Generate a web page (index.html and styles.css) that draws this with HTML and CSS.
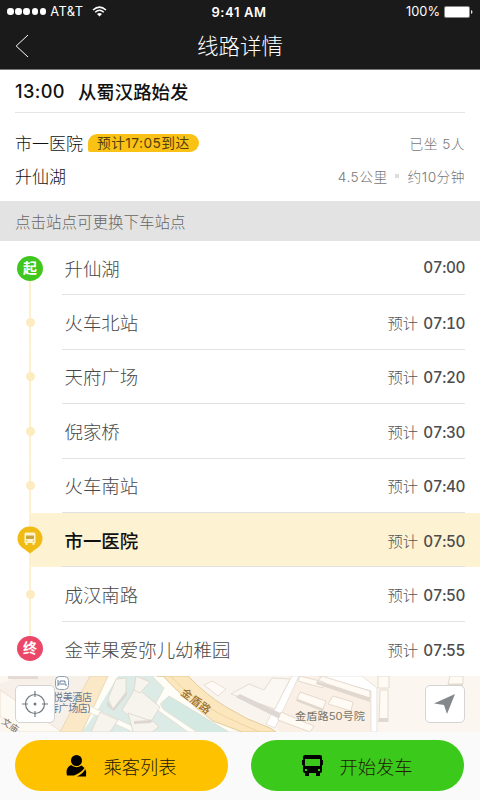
FILE: index.html
```html
<!DOCTYPE html>
<html lang="zh-CN">
<head>
<meta charset="utf-8">
<title>线路详情</title>
<link rel="stylesheet" href="styles.css">
</head>
<body>
<main class="app">
  <header class="top">
    <div class="status">
      <div class="carrier"><span class="signal"><i></i><i></i><i></i><i></i><i></i></span><span class="network">AT&amp;T</span>
        <svg class="wifi" width="15" height="11" viewBox="0 0 15 11"><g fill="none" stroke="#fff" stroke-width="1.5"><path d="M1 4Q7.500-1.800 14 4M3.200 6.200Q7.500 2.300 11.800 6.200"/></g><path d="M5 8Q7.500 5.800 10 8L7.500 10.600Z" fill="#fff"/></svg>
      </div>
      <div class="clock">9:41 AM</div>
      <div class="power"><span>100%</span><svg width="29" height="12" viewBox="0 0 29 12"><rect x=".5" y=".5" width="25" height="11" rx="1.500" fill="#fff" stroke="#888"/><path d="M27 4v4q1.500-.6 1.500-2T27 4" fill="#ddd"/></svg></div>
    </div>
    <nav class="nav">
      <svg class="back" width="14" height="24" viewBox="0 0 14 24"><path d="M13 1 1.200 12 13 23" fill="none" stroke="#fff" stroke-width="1"/></svg>
      <h1>线路详情</h1>
    </nav>
  </header>
  <section class="trip">
    <h2><span class="depart">13:00</span><span>从蜀汉路始发</span></h2>
    <div class="legs">
      <div class="leg"><span class="place">市一医院</span><span class="eta">预计17:05到达</span><span class="meta">已坐 5人</span></div>
      <div class="leg"><span class="place">升仙湖</span><span class="meta">4.5公里<i class="sep"></i>约10分钟</span></div>
    </div>
  </section>
  <p class="hint">点击站点可更换下车站点</p>
  <ul class="stops">
    <li class="first"><span class="rail"><b class="badge start">起</b></span><div class="stop"><span>升仙湖</span><span class="time"><b>07:00</b></span></div></li>
    <li><span class="rail"><i class="dot"></i></span><div class="stop"><span>火车北站</span><span class="time">预计 <b>07:10</b></span></div></li>
    <li><span class="rail"><i class="dot"></i></span><div class="stop"><span>天府广场</span><span class="time">预计 <b>07:20</b></span></div></li>
    <li><span class="rail"><i class="dot"></i></span><div class="stop"><span>倪家桥</span><span class="time">预计 <b>07:30</b></span></div></li>
    <li><span class="rail"><i class="dot"></i></span><div class="stop"><span>火车南站</span><span class="time">预计 <b>07:40</b></span></div></li>
    <li class="current"><span class="rail"><svg class="pin" width="26" height="28" viewBox="0 0 26 28"><path d="M13 27.500 7.500 23.200A12.500 12 0 1 1 18.500 23.200Z" fill="#f0bb12"/><path d="M9 6.500h8q1.500 0 1.500 1.500v9h-1v2h-2v-2h-5v2h-2v-2h-1V8q0-1.500 1.500-1.500Z" fill="#fff4cd"/><path d="M9 9.500h8v3.500H9Z" fill="#c8a63e"/><path d="M8.800 15h1.500M15.700 15h1.500" stroke="#dba900"/></svg></span><div class="stop"><span>市一医院</span><span class="time">预计 <b>07:50</b></span></div></li>
    <li><span class="rail"><i class="dot"></i></span><div class="stop"><span>成汉南路</span><span class="time">预计 <b>07:50</b></span></div></li>
    <li class="last"><span class="rail"><b class="badge end">终</b></span><div class="stop"><span>金苹果爱弥儿幼稚园</span><span class="time">预计 <b>07:55</b></span></div></li>
  </ul>
  <section class="map">
    <svg class="canvas" width="480" height="56" viewBox="0 0 480 56">
      <rect width="480" height="56" fill="#fbf7f0"/>
      <path d="M0 8 20 0H92L60 56H54L0 18Z" fill="#f7f0e9"/>
      <path d="M8 0H38V3H8Z" fill="#e4dad3"/>
      <path d="M0 14 62 56H20L0 40Z" fill="#fdfaf4" stroke="#ecdccb" stroke-width=".8"/>
      <path d="M118 0H160L166 12 156 28 192 56H82L92 31Z" fill="#dcebe5"/>
      <path d="M108 0H118L95 38 82 56H78Z" fill="#fffdf8"/>
      <path d="M90 0H108L82 56H60Z" fill="#fbe8c6" stroke="#e6d3af" stroke-width=".8"/>
      <path d="M166 18 232 56H196L160 31Z" fill="#d5e9e3"/>
      <path d="M88 29 94 32 145 56H133L84 34Z" fill="#fffdf8" stroke="#e2dccf" stroke-width=".7"/>
      <path d="M187 0H292L268 50 226 31Z" fill="#f9f4ed"/>
      <path d="M297 0H362L374 12V56H280L273 44Z" fill="#fbf0e6"/>
      <path d="M160 0H169L226 49 250 56H229L169 20 160 28 164 34 197 56H188L156 33Q154 29 157 25L164 12 152 0Z" fill="#fffdf8" stroke="#ddd8c9" stroke-width=".7"/>
      <path d="M157 0H188Q205 18 226 31T270 52L276 56H242L213 45Q186 25 163 0Z" fill="#fce6bd" stroke="#dfc794" stroke-width=".9"/>
      <path d="M170 0Q197 27 222 39T260 56" fill="none" stroke="#ecd29c" stroke-width=".9"/>
      <path d="M292 0H299L275 52 266 48ZM362 0 377 12V56H371V15L318 0Z" fill="#fff" stroke="#ded8ce" stroke-width=".7"/>
      <g fill="#f7f3ed" stroke="#dbd5cc" stroke-width=".8">
        <path d="m108 23 8-20 10-1v14l-13 17Z"/><path d="m122 34 14-23 24 20-8 13-18 1Z"/><path d="m136 0 14 6-10 11-6-3Z"/><path d="m100 36 18 8-8 12H91Z"/><path d="m128 37 26 9 5 5-7 5h-19Z"/>
      </g>
      <path d="m107 25 6 8 14-17v3l-13 16-7-5ZM134 45l18-1-1 3-17 1ZM240 18l44 21-2 5-46-23Z" fill="#ddd6d2"/>
      <path d="m231 18 18-10 15 6 8-12 18 1-15 30Z" fill="#fbf7f2" stroke="#e6ded4"/>
      <path d="m240 18 44 21-2 5-46-23Z" fill="#ded7d3"/>
      <path d="m204 9 8-4 14 8-8 7Z" fill="#fffaf5" stroke="#eadfd3"/>
      <g fill="#fffaf3" stroke="#ddd3c7" stroke-width=".8">
        <path d="m300 16 26 9-3 8-26-10Z"/><path d="m333 20 20 6-2 9-23-7Z"/><path d="m322 0 48 15v7L318 5Z"/><path d="m281 36 33 14-4 6-32-12Z"/><path d="M378 0h11v12h-11ZM380 14h8v31h-9ZM450 0h13v8h-15Z"/><path d="m300 0 24 6-1 6-25-7Z"/>
      </g>
      <path d="m297 23 26 10 1 3-28-11ZM317 5l53 17v4L316 8ZM379 42h9v4h-10ZM448 8h15v3h-16Z" fill="#e1d8cf"/>
      <g class="map-name hotel"><rect x="55.500" y=".5" width="13" height="13" rx="4" fill="#fff" stroke="#8d9db2"/><path d="M58 4v6m0-2h8v2M60 7V5h5v2" fill="none" stroke="#647d9d"/><text x="53" y="25" textLength="39">悦美酒店</text><text x="49" y="36" textLength="42">寺广场店)</text></g>
      <text class="map-name road" transform="translate(180 18) rotate(37)" textLength="34">金盾路</text>
      <text class="map-name lane" transform="translate(1 47) rotate(34)">文庙</text>
      <text class="map-name" x="295" y="44" textLength="70" lengthAdjust="spacingAndGlyphs">金盾路50号院</text>
    </svg>
    <button class="tool"><svg width="28" height="28" viewBox="0 0 28 28"><g fill="none" stroke="#737b80" stroke-width="1.200"><circle cx="14" cy="14" r="9.500"/><path d="M14 1v6M14 21v6M1 14h6M21 14h6"/></g><circle cx="14" cy="14" r="1.500" fill="#737b80"/></svg></button>
    <button class="tool"><svg width="22" height="22" viewBox="0 0 22 22"><path d="M21 1 0 10.500 10 12 13 21Z" fill="#84888a"/></svg></button>
  </section>
  <footer class="actions">
    <button class="passengers"><svg width="21" height="22" viewBox="0 0 21 22"><circle cx="10.500" cy="5.500" r="5.500"/><path d="M5 10Q10 14 15.500 10.500L18.500 13Q15 18 8 20.500H1Q-1 13 5 10Z"/><path d="M19.300 14Q21 17 20 21.500H11Q17 19 19.300 14Z"/></svg><span>乘客列表</span></button>
    <button class="go"><svg width="21" height="22" viewBox="0 0 21 22"><path fill-rule="evenodd" d="M3 0h15q2 0 2 2v14q0 2-2 2v3h-4v-3H7v3H3v-3q-2 0-2-2V2q0-2 2-2ZM3 4v7h15V4ZM3 14v2h2v-2ZM16 14v2h2v-2ZM0 5h1v5H0ZM20 5h1v5h-1Z"/></svg><span>开始发车</span></button>
  </footer>
</main>
</body>
</html>
```
FILE: styles.css
```css
* { box-sizing: border-box; }
body { margin: 0; background: #fff; font-family: Inter, "Noto Sans CJK SC", sans-serif; color: #222; }
.app { width: 480px; height: 800px; display: flex; flex-direction: column; overflow: hidden; }
h1, h2, p, ul { margin: 0; padding: 0; }
button { border: 0; padding: 0; font: inherit; }
svg { display: block; flex: none; }
.top { height: 70px; background: #1a1a1a; color: #fff; border-bottom: 1px solid #777; }
.status { height: 22px; display: grid; grid-template-columns: 1fr auto 1fr; align-items: center; padding: 1px 7px 0; font-size: 12px; }
.carrier, .power { display: flex; align-items: center; }
.carrier { gap: 4px; }
.network { font-size: 12.800px; letter-spacing: .5px; }
.wifi { margin-left: 4px; }
.signal { display: flex; gap: 1.700px; }
.signal i { width: 6.500px; height: 6.500px; border-radius: 50%; background: #fff; }
.clock { margin-right: 2px; font-size: 13px; font-weight: 600; letter-spacing: .6px; }
.power { justify-content: flex-end; gap: 4px; font-size: 12.800px; }
.nav { height: 47px; display: grid; grid-template-columns: 1fr auto 1fr; align-items: center; padding: 0 15px; }
.nav h1 { font-size: 21.500px; font-weight: 300; line-height: 46px; }
.trip { height: 131px; }
.trip h2 { height: 43px; margin: 0 15px; display: flex; align-items: center; gap: 13px; border-bottom: 1px solid #e4e4e4; color: #111; font-size: 18.400px; font-weight: 500; }
.depart { font-size: 18.200px; letter-spacing: .4px; }
.legs { padding: 13px 15px 0; }
.leg { height: 33px; display: flex; align-items: center; }
.place { font-size: 17px; font-weight: 300; color: #111; }
.eta { height: 18px; margin-left: 5px; padding: 0 9px; border-radius: 9px 9px 9px 2px; background: #fac215; color: #55400c; font-size: 13.700px; line-height: 18px; letter-spacing: .45px; }
.meta { margin-left: auto; display: flex; align-items: center; color: #777; font-size: 13.700px; font-weight: 300; letter-spacing: .5px; white-space: pre; }
.sep { width: 4px; height: 4px; margin: 0 9px 0 7px; background: #ddd; }
.hint { height: 40px; padding: 1px 0 0 15px; background: #e3e3e3; color: #666; font-size: 15.500px; line-height: 41px; font-weight: 300; }
.stops { height: 435px; display: grid; grid-template-rows: repeat(8, 1fr); list-style: none; }
.stops li { display: flex; min-height: 0; }
.rail { width: 32px; margin: 0 16px 0 14px; display: flex; justify-content: center; align-items: center; background: linear-gradient(#fdf0cc, #fdf0cc) center / 2px 100% no-repeat; }
.first .rail { background-position: bottom; background-size: 2px 50%; }
.last .rail { background-position: top; background-size: 2px 50%; }
.badge { width: 26px; height: 25px; border-radius: 50%; color: #fff; font-size: 14px; line-height: 24px; text-align: center; }
.start { background: #40c71f; }
.end { background: #eb4768; }
.dot { width: 9px; height: 9px; border-radius: 50%; background: #fdecc0; }
.stop { flex: 1; margin-right: 15px; display: flex; align-items: center; justify-content: space-between; padding-left: 2.500px; border-bottom: 1px solid #e2e2e2; color: #484848; font-size: 18.450px; font-weight: 300; }
.time { font-size: 15.300px; color: #555; font-variant-numeric: tabular-nums; }
.time b { font-weight: 500; color: #4d4d4d; letter-spacing: -.4px; margin-left: 1px; }
.current { background: linear-gradient(#fdf2d2, #fdf2d2) right / 450px 100% no-repeat; }
.current .stop span:first-child { color: #111; font-weight: 500; }
.last .stop { border-bottom: 0; }
.map { height: 55px; position: relative; display: flex; justify-content: space-between; align-items: center; padding: 1px 15px 0; }
.canvas { position: absolute; inset: 0; }
.map-name { font-size: 10px; fill: #777568; }
.hotel { fill: #637793; }
.road { font-size: 11px; fill: #9a7130; font-weight: 500; }
.lane { font-size: 9px; fill: #726c61; }
.tool { position: relative; width: 40px; height: 38px; display: grid; place-items: center; border: 1px solid #d4d4d4; border-radius: 5px; background: #fffffff5; }
.actions { flex: 1; display: flex; gap: 23px; padding: 9px 16px 9px 15px; background: #fafafa; }
.actions button { width: 213px; height: 51px; border-radius: 26px; display: flex; justify-content: center; align-items: center; gap: 16px; color: #211a08; font-size: 18.300px; font-weight: 300; }
.passengers { background: #ffc200; }
.go { background: #3bca1b; }
```
